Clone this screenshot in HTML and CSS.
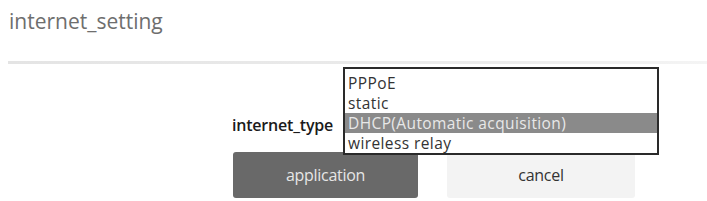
FILE: index.html
```html
<!DOCTYPE html>
<html lang="en">
<head>
  <meta charset="UTF-8">
  <title>internet_setting</title>
  <link rel="stylesheet" href="styles.css">
</head>
<body>
  <!-- Header -->
  <div class="page-title">internet_setting</div>
  <div class="title-line"></div>

  <!-- Form -->
  <div class="form-row">
    <label class="form-label">internet_type</label>
    <div class="select-wrap">
      <div class="select-box"></div>
      <ul class="option-list">
        <li>PPPoE</li>
        <li>static</li>
        <li class="selected">DHCP(Automatic acquisition)</li>
        <li>wireless relay</li>
      </ul>
    </div>
  </div>

  <div class="button-row">
    <button class="btn btn-apply">application</button>
    <button class="btn btn-cancel">cancel</button>
  </div>
</body>
</html>
```

FILE: styles.css
```css
body {
  margin: 0;
  font-family: 'Open Sans', 'Liberation Sans', sans-serif;
  background: #fff;
  color: #222;
  overflow: hidden;
}
.page-title {
  padding: 7px 0 0 9px;
  font-size: 21px;
  line-height: 28px;
  letter-spacing: 0;
  color: #6e6e6e;
}
.title-line {
  height: 3px;
  margin: 26px 0 0 8px;
  background: linear-gradient(to right, #e4e4e4, #ececec 70%, #f4f4f4);
}
.form-row {
  display: flex;
  align-items: center;
  margin: 48px 0 0 232px;
  height: 20px;
}
.form-label {
  width: 111px;
  padding-top: 5px;
  font-size: 16px;
  font-weight: 600;
  letter-spacing: -0.2px;
  color: #1a1a1a;
}
.select-wrap {
  position: relative;
  width: 316px;
  height: 20px;
}
.select-box {
  height: 20px;
}
.option-list {
  position: absolute;
  left: 0;
  top: -45px;
  width: 312px;
  margin: 0;
  padding: 4px 0 0;
  list-style: none;
  background: #fff;
  border: 2px solid #2a2a2a;
  z-index: 5;
}
.option-list li {
  height: 20px;
  padding-left: 3px;
  font-size: 15.5px;
  line-height: 20px;
  letter-spacing: 0.4px;
  color: #333;
}
.option-list li.selected {
  background: #8a8a8a;
  color: #e8e8e8;
}
.button-row {
  display: flex;
  gap: 29px;
  margin: 20px 0 0 233px;
}
.btn {
  width: 185px;
  height: 46px;
  border: none;
  border-radius: 3px;
  font-family: inherit;
  font-size: 16px;
  letter-spacing: -0.3px;
  cursor: pointer;
}
.btn-apply {
  background: #696969;
  color: #e6e6e6;
}
.btn-cancel {
  width: 188px;
  background: #f3f3f3;
  color: #333;
}
```
